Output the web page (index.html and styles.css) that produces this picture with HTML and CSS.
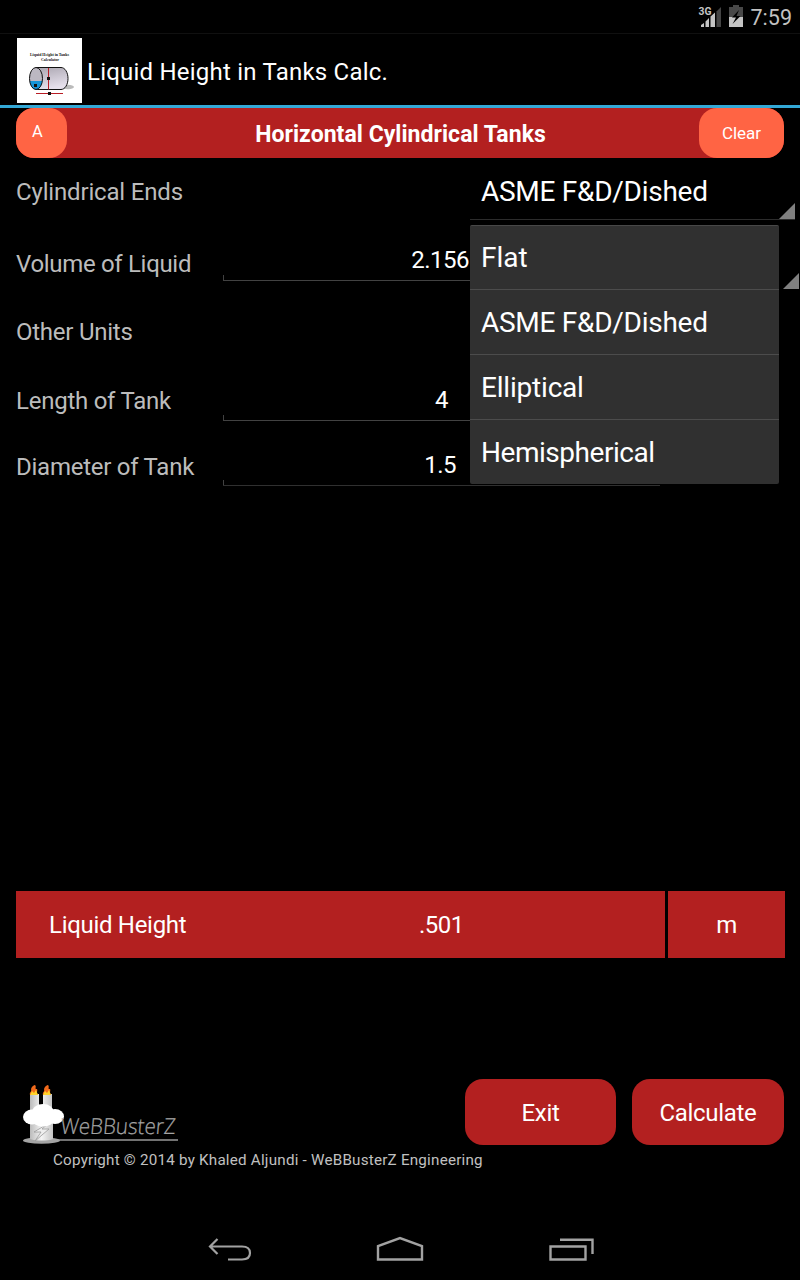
FILE: index.html
```html
<!DOCTYPE html>
<html lang="en">
<head>
<meta charset="utf-8">
<title>Liquid Height in Tanks Calc.</title>
<link rel="stylesheet" href="styles.css">
</head>
<body>
<div class="screen">
  <div class="status">
    <svg class="signal" width="24" height="24" viewBox="0 0 24 24">
      <path d="M18.500 6.500 23 2v20h-4.500z" fill="#444"/>
      <path d="M3 22v-2l3-2v4zM7.500 22v-5.500L11 13v9zM12.500 22V11.500L17 7.500V22z" fill="#c4c4c4"/>
      <text class="net" x="0.500" y="10" textLength="13" lengthAdjust="spacingAndGlyphs">3G</text>
    </svg>
    <svg class="battery" width="14" height="22" viewBox="0 0 14 22">
      <path d="M4 0h6v2h4v20H0V2h4z" fill="#484848"/>
      <path d="M0 12h14v10H0z" fill="#c4c4c4"/>
      <path d="M10 5 3 12.500h4L3.500 19l8-8H7.500z" fill="#000"/>
    </svg>
    <span class="clock">7:59</span>
  </div>
  <header class="appbar">
    <svg class="appicon" width="65" height="65" viewBox="0 0 65 65">
      <defs>
        <linearGradient id="tank" x1="0" y1="0" x2="0.300" y2="1"><stop offset="0" stop-color="#aaa6b0"/><stop offset="1" stop-color="#e6e0ec"/></linearGradient>
      </defs>
      <rect width="65" height="65" fill="#fff"/>
      <text class="tiny" x="13" y="17.500" textLength="39" lengthAdjust="spacingAndGlyphs">Liquid Height in Tanks</text>
      <text class="tiny" x="24" y="22.500" textLength="18" lengthAdjust="spacingAndGlyphs">Calculator</text>
      <ellipse cx="51" cy="49" rx="6" ry="2.200" fill="#bbb"/>
      <path d="M19 29.500h25c4 0 7 5 7 11s-3 11-7 11H19z" fill="url(#tank)" stroke="#111"/>
      <ellipse cx="19" cy="40.500" rx="6.500" ry="11" fill="#bcb8c2"/>
      <path d="M12.800 43h12.400c-.500 5-3 8.500-6.200 8.500s-5.700-3.500-6.200-8.500z" fill="#1595d8"/>
      <ellipse cx="19" cy="40.500" rx="6.500" ry="11" fill="none" stroke="#111"/>
      <path d="M31.500 30v21.500M19 55.500h27" stroke="#b91d25"/>
      <path d="M30 39h3v3h-3zM31 54h3v3h-3zM17 46h3v3h-3z" fill="#111"/>
    </svg>
    <h1 class="apptitle">Liquid Height in Tanks Calc.</h1>
  </header>
  <div class="titlebar">
    <button class="pill about">A</button>
    <h2 class="heading">Horizontal Cylindrical Tanks</h2>
    <button class="pill clear">Clear</button>
  </div>
  <main class="form">
    <div class="row ends">
      <span class="label">Cylindrical Ends</span>
      <div class="spinner"><span class="choice">ASME F&amp;D/Dished</span></div>
      <ul class="menu">
        <li class="option">Flat</li>
        <li class="option">ASME F&amp;D/Dished</li>
        <li class="option">Elliptical</li>
        <li class="option tight">Hemispherical</li>
      </ul>
    </div>
    <div class="row volume">
      <span class="label">Volume of Liquid</span>
      <div class="field"><span>2.156</span></div>
      <div class="spinner unit"></div>
    </div>
    <div class="row other"><span class="label">Other Units</span></div>
    <div class="row length">
      <span class="label">Length of Tank</span>
      <div class="field"><span>4</span></div>
    </div>
    <div class="row diameter">
      <span class="label">Diameter of Tank</span>
      <div class="field"><span>1.5</span></div>
    </div>
  </main>
  <section class="result">
    <div class="reading"><span class="name">Liquid Height</span><span class="value">.501</span></div>
    <div class="measure">m</div>
  </section>
  <footer class="footer">
    <div class="actions">
      <svg class="brand" width="158" height="62" viewBox="0 0 158 62">
        <defs>
          <linearGradient id="wax"><stop offset="0" stop-color="#bbb"/><stop offset=".5" stop-color="#f4f4f4"/><stop offset="1" stop-color="#c4c4c4"/></linearGradient>
        </defs>
        <path d="M34 57h121" stroke="#999" stroke-width="1.500"/>
        <ellipse cx="18.500" cy="57.500" rx="18.500" ry="3.200" fill="#a4a4a4"/>
        <path d="M7 11h9v18H7zM20 11h9v18h-9z" fill="url(#wax)"/>
        <path d="M7 36h23v20c-6 2-17 2-23 0z" fill="url(#wax)"/>
        <path d="M26 40 11 49h7l-6 9 14-12h-7z" fill="#eee" stroke="#999" stroke-width=".8"/>
        <path d="M7 12c-1-3 2-3 1-6 1-3 3-4 4-4 2 2-1 4 2 4 1 2-1 3 1 6zM20 12c-1-3 2-3 1-6 1-3 3-4 4-4 2 2-1 4 2 4 1 2-1 3 1 6z" fill="#f26a1b"/>
        <path d="M7 12 9 8l2 2 2-3 2 5zM20 12l2-4 2 2 2-3 2 5z" fill="#ffd329"/>
        <g fill="#fff"><ellipse cx="9" cy="34" rx="9" ry="7.500"/><ellipse cx="20" cy="29.500" rx="11" ry="8.500"/><ellipse cx="32" cy="33.500" rx="9" ry="7.500"/><ellipse cx="20" cy="36.500" rx="11" ry="7"/></g>
        <text class="brandtext" transform="translate(37 51) skewX(-5)" textLength="115" lengthAdjust="spacingAndGlyphs">WeBBusterZ</text>
      </svg>
      <button class="action exit">Exit</button>
      <button class="action calc">Calculate</button>
    </div>
    <p class="copyright">Copyright © 2014 by Khaled Aljundi - WeBBusterZ Engineering</p>
  </footer>
  <nav class="navbar">
    <svg width="44" height="26" viewBox="0 0 44 26"><path d="M9.500 2 2 9.500 9.500 17M2.500 9.500H34c5 0 8 2.500 8 6.500s-3 6.500-8 6.500H20" fill="none" stroke="#a2a2a2" stroke-width="2.200"/></svg>
    <svg width="48" height="26" viewBox="0 0 48 26"><path d="M2 22.500V9L24 1l22 8v13.500z" fill="none" stroke="#a2a2a2" stroke-width="2.400"/></svg>
    <svg width="46" height="26" viewBox="0 0 46 26"><path d="M1.500 9.500h35v13h-35zM11 2.800h32.500V17" fill="none" stroke="#a2a2a2" stroke-width="2.400"/></svg>
  </nav>
</div>
</body>
</html>
```
FILE: styles.css
```css
* { box-sizing: border-box; }
body { margin: 0; background: #000; color: #fff; font: 24px Roboto, sans-serif; }
.screen { width: 800px; height: 1280px; display: flex; flex-direction: column; overflow: hidden; }
button { border: 0; color: inherit; font-family: inherit; padding: 0; }
svg { flex: none; display: block; overflow: visible; }
span, h1, h2, button { white-space: nowrap; }

.status { height: 34px; padding: 1px 8px 0 0; display: flex; align-items: center; justify-content: flex-end; border-bottom: 1px solid #101010; }
.signal { margin-right: 7px; margin-top: -1px; }
.battery { margin-right: 8px; margin-top: -3px; }
.net { font: bold 11.5px Roboto, sans-serif; fill: #c4c4c4; stroke: #000; stroke-width: 2px; paint-order: stroke; }
.clock { font-size: 21.5px; color: #c2c2c2; }

.appbar { height: 74px; padding: 4px 0 0 17px; display: flex; border-bottom: 3px solid #33a8d6; }
.apptitle { margin: 0 0 0 5px; font-size: 24px; font-weight: 400; line-height: 68px; letter-spacing: .22px; }
.tiny { font: bold 4px "Liberation Serif", serif; fill: #111; }

.titlebar { height: 50px; margin: 0 16px; background: #b32020; border-radius: 18px; display: flex; justify-content: space-between; }
.pill { height: 50px; border-radius: 18px; background: #ff6444; font-size: 16.5px; }
.about { width: 51px; padding: 0 8px 3px 0; }
.clear { width: 85px; font-size: 17px; }
.heading { margin: 0 0 0 35px; font-size: 23px; font-weight: 700; line-height: 53px; letter-spacing: .04px; }

.form { height: 733px; padding-left: 16px; }
.row { display: flex; position: relative; align-items: center; }
.label { width: 207px; color: #bcbcbc; letter-spacing: -.25px; }
.ends { height: 68px; }
.ends .label { letter-spacing: -.17px; }
.volume { height: 76px; }
.volume .label { letter-spacing: -.32px; }
.other { height: 60px; }
.length { height: 78px; }
.diameter { height: 54px; }

.field { width: 437px; align-self: flex-start; display: flex; justify-content: flex-end; letter-spacing: -.5px; border-bottom: 1px solid #424242; background: linear-gradient(#424242, #424242) 0 100% / 1px 5px no-repeat; }
.volume .field { height: 55px; padding: 20px 191px 0 0; }
.length .field { height: 59px; padding: 24px 212px 0 0; }
.diameter .field { height: 46px; padding: 11px 204px 0 0; border-bottom-color: #303030; }

.spinner { width: 325px; height: 62px; margin-left: 247px; padding: 18px 0 0 11px; align-self: flex-start; border-bottom: 1px solid #2c2c2c; font-size: 28px; line-height: 32px; letter-spacing: -.27px; }
.spinner::after { content: ""; display: block; width: 16px; height: 16px; margin: -5px 0 0 auto; background: #808080; clip-path: polygon(100% 0, 100% 100%, 0 100%); }
.choice { display: block; }
.unit { width: 139px; height: 63px; margin-left: 0; padding: 52px 0 0; border: 0; }

.menu { position: absolute; left: 454px; top: 67px; z-index: 2; width: 309px; margin: 0; padding: 0; list-style: none; background: #303030; border-top: 1px solid #484848; border-radius: 2px; overflow: hidden; }
.option { height: 65px; padding-left: 11px; font-size: 28px; line-height: 66px; border-bottom: 1px solid #4c4c4c; letter-spacing: -.2px; }
.option:first-child { height: 64px; line-height: 64px; letter-spacing: 0; }
.option:nth-child(2) { letter-spacing: -.27px; }
.option:last-child { border-bottom: 0; height: 64px; }
.tight { letter-spacing: -.46px; }

.result { height: 67px; margin: 0 15px 0 16px; display: grid; grid-template: 67px / 649px 117px; column-gap: 3px; line-height: 69px; letter-spacing: -.3px; }
.reading { background: #b32020; display: flex; padding-left: 33px; }
.name { width: 370px; }
.value { letter-spacing: -.5px; }
.measure { background: #b32020; text-align: center; }

.footer { padding: 121px 16px 0 23px; height: 262px; }
.actions { display: flex; align-items: flex-start; height: 66px; }
.brand { margin-top: 4px; }
.brandtext { font: 300 22px "Open Sans", sans-serif; fill: #a4a4a4; stroke: #a4a4a4; stroke-width: .25px; }
.action { height: 66px; border-radius: 18px; background: #b32020; font-size: 24px; padding-top: 2px; letter-spacing: -.3px; }
.exit { width: 151px; margin-left: 284px; }
.calc { width: 152px; margin-left: 16px; }
.copyright { margin: 5px 0 0 30px; font-size: 15.2px; line-height: 20px; color: #c0c0c0; white-space: nowrap; letter-spacing: .22px; }

.navbar { flex: 1; display: flex; padding: 17px 0 0 208px; }
.navbar svg:nth-child(2) { margin-left: 124px; }
.navbar svg:nth-child(3) { margin-left: 125px; }
```
